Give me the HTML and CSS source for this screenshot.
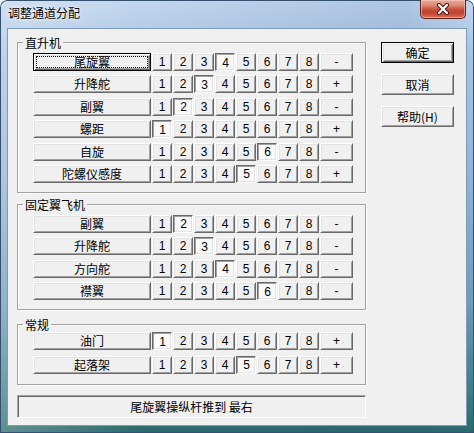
FILE: index.html
```html
<!DOCTYPE html>
<html lang="zh-CN">
<head>
<meta charset="utf-8">
<title>调整通道分配</title>
<link rel="stylesheet" href="styles.css">
</head>
<body>
<div class="window">
  <div class="titlebar">
    <span class="title">调整通道分配</span>
    <button class="close" aria-label="关闭">
      <svg width="14" height="12" viewBox="0 0 14 12"><path d="M3 2 L11 10 M11 2 L3 10" stroke="#4a1a12" stroke-width="4.2" stroke-linecap="round"/><path d="M3 2 L11 10 M11 2 L3 10" stroke="#fff" stroke-width="2.2" stroke-linecap="round"/></svg>
    </button>
  </div>
  <div class="client">
    <div class="main">
      <fieldset class="group g1">
        <legend>直升机</legend>
        <div class="rows">
          <div class="row">
            <button class="btn label default focus">尾旋翼</button>
            <button class="btn num">1</button><button class="btn num">2</button><button class="btn num">3</button><button class="btn num on">4</button><button class="btn num">5</button><button class="btn num">6</button><button class="btn num">7</button><button class="btn num">8</button>
            <button class="btn sign">-</button>
          </div>
          <div class="row">
            <button class="btn label">升降舵</button>
            <button class="btn num">1</button><button class="btn num">2</button><button class="btn num on">3</button><button class="btn num">4</button><button class="btn num">5</button><button class="btn num">6</button><button class="btn num">7</button><button class="btn num">8</button>
            <button class="btn sign">+</button>
          </div>
          <div class="row">
            <button class="btn label">副翼</button>
            <button class="btn num">1</button><button class="btn num on">2</button><button class="btn num">3</button><button class="btn num">4</button><button class="btn num">5</button><button class="btn num">6</button><button class="btn num">7</button><button class="btn num">8</button>
            <button class="btn sign">-</button>
          </div>
          <div class="row">
            <button class="btn label">螺距</button>
            <button class="btn num on">1</button><button class="btn num">2</button><button class="btn num">3</button><button class="btn num">4</button><button class="btn num">5</button><button class="btn num">6</button><button class="btn num">7</button><button class="btn num">8</button>
            <button class="btn sign">+</button>
          </div>
          <div class="row">
            <button class="btn label">自旋</button>
            <button class="btn num">1</button><button class="btn num">2</button><button class="btn num">3</button><button class="btn num">4</button><button class="btn num">5</button><button class="btn num on">6</button><button class="btn num">7</button><button class="btn num">8</button>
            <button class="btn sign">-</button>
          </div>
          <div class="row">
            <button class="btn label">陀螺仪感度</button>
            <button class="btn num">1</button><button class="btn num">2</button><button class="btn num">3</button><button class="btn num">4</button><button class="btn num on">5</button><button class="btn num">6</button><button class="btn num">7</button><button class="btn num">8</button>
            <button class="btn sign">+</button>
          </div>
        </div>
      </fieldset>

      <fieldset class="group g2">
        <legend>固定翼飞机</legend>
        <div class="rows">
          <div class="row">
            <button class="btn label">副翼</button>
            <button class="btn num">1</button><button class="btn num on">2</button><button class="btn num">3</button><button class="btn num">4</button><button class="btn num">5</button><button class="btn num">6</button><button class="btn num">7</button><button class="btn num">8</button>
            <button class="btn sign">-</button>
          </div>
          <div class="row">
            <button class="btn label">升降舵</button>
            <button class="btn num">1</button><button class="btn num">2</button><button class="btn num on">3</button><button class="btn num">4</button><button class="btn num">5</button><button class="btn num">6</button><button class="btn num">7</button><button class="btn num">8</button>
            <button class="btn sign">-</button>
          </div>
          <div class="row">
            <button class="btn label">方向舵</button>
            <button class="btn num">1</button><button class="btn num">2</button><button class="btn num">3</button><button class="btn num on">4</button><button class="btn num">5</button><button class="btn num">6</button><button class="btn num">7</button><button class="btn num">8</button>
            <button class="btn sign">-</button>
          </div>
          <div class="row">
            <button class="btn label">襟翼</button>
            <button class="btn num">1</button><button class="btn num">2</button><button class="btn num">3</button><button class="btn num">4</button><button class="btn num">5</button><button class="btn num on">6</button><button class="btn num">7</button><button class="btn num">8</button>
            <button class="btn sign">-</button>
          </div>
        </div>
      </fieldset>

      <fieldset class="group g3">
        <legend>常规</legend>
        <div class="rows">
          <div class="row">
            <button class="btn label">油门</button>
            <button class="btn num on">1</button><button class="btn num">2</button><button class="btn num">3</button><button class="btn num">4</button><button class="btn num">5</button><button class="btn num">6</button><button class="btn num">7</button><button class="btn num">8</button>
            <button class="btn sign">+</button>
          </div>
          <div class="row">
            <button class="btn label">起落架</button>
            <button class="btn num">1</button><button class="btn num">2</button><button class="btn num">3</button><button class="btn num">4</button><button class="btn num on">5</button><button class="btn num">6</button><button class="btn num">7</button><button class="btn num">8</button>
            <button class="btn sign">+</button>
          </div>
        </div>
      </fieldset>

      <div class="status">尾旋翼操纵杆推到 最右</div>
    </div>

    <div class="side">
      <button class="btn cmd default">确定</button>
      <button class="btn cmd">取消</button>
      <button class="btn cmd">帮助(H)</button>
    </div>
  </div>
</div>
</body>
</html>
```

FILE: styles.css
```css
* { box-sizing: border-box; }

html, body {
  margin: 0;
  padding: 0;
  background: #ffffff;
}

body {
  font-family: "Noto Sans CJK SC", sans-serif;
  font-size: 12px;
  color: #000;
}

.window {
  width: 474px;
  height: 433px;
  padding: 0 8px 8px 8px;
  border-radius: 7px 7px 0 0;
  background:
    linear-gradient(90deg, rgba(255,255,255,0.25) 0%, rgba(255,255,255,0) 30%, rgba(40,80,140,0.12) 85%, rgba(255,255,255,0) 100%),
    linear-gradient(180deg, #c3d7ee 0%, #a9c4e3 12%, #93b4d8 40%, #6d9bb8 70%, #3f7f85 90%, #2a6a6c 100%);
  box-shadow: inset 0 0 0 1px #34506e;
  display: flex;
  flex-direction: column;
}

.titlebar {
  height: 29px;
  margin: 0 -8px;
  display: flex;
  justify-content: space-between;
  align-items: flex-start;
  padding-left: 8px;
  padding-right: 8px;
}

.title {
  margin-top: 6px;
  line-height: 14px;
  font-size: 12px;
  color: #000;
  text-shadow: 0 0 5px rgba(255,255,255,0.95), 0 0 2px rgba(255,255,255,0.9);
}

.close {
  width: 46px;
  height: 19px;
  margin: 0;
  padding: 0;
  border: 1px solid #5a2018;
  border-top: none;
  border-radius: 0 0 5px 5px;
  background: linear-gradient(180deg, #e9a999 0%, #dd8a76 30%, #c9503a 52%, #c0412d 70%, #d9705a 100%);
  box-shadow: inset 0 0 0 1px rgba(255,210,200,0.55);
  display: flex;
  align-items: center;
  justify-content: center;
}

.client {
  height: 396px;
  background: #f0f0f0;
  display: flex;
  align-items: flex-start;
  box-shadow: 0 0 0 1px #7f9bb7;
}

.main {
  width: 349px;
  margin-left: 9px;
  padding-top: 7px;
  display: flex;
  flex-direction: column;
}

.group {
  margin: 0;
  min-width: 0;
  width: 349px;
  padding: 0;
  border: 1px solid #a0a0a0;
  box-shadow: inset 1px 1px 0 #fff, 1px 1px 0 #fff;
}

.group legend {
  margin-left: 5px;
  padding: 0 2px;
  line-height: 13px;
  height: 13px;
  font-size: 12px;
  background: #f0f0f0;
}

.g1 { padding-top: 4px; padding-bottom: 9px; }
.g2 { margin-top: 5px; padding-top: 4px; padding-bottom: 9px; }
.g3 { margin-top: 8px; padding-top: 1px; padding-bottom: 10px; }
.g3 .rows { gap: 5.5px; }

.rows {
  display: flex;
  flex-direction: column;
  gap: 4.4px;
  padding-left: 15px;
}

.row {
  display: flex;
  gap: 1px;
  height: 18px;
}

.btn {
  margin: 0;
  padding: 0;
  font-family: "Liberation Sans", "Noto Sans CJK SC", sans-serif;
  font-size: 12px;
  line-height: 14px;
  color: #000;
  background: #f0f0f0;
  border: 1px solid;
  border-color: #ffffff #696969 #696969 #ffffff;
  box-shadow: inset 1px 1px 0 #e3e3e3, inset -1px -1px 0 #a0a0a0;
  display: flex;
  align-items: center;
  justify-content: center;
}

.btn.label {
  width: 118px;
  font-family: "Noto Sans CJK SC", sans-serif;
}

.btn.num { width: 20px; }
.btn.sign { width: 33px; }

.btn.on {
  background: #f9f9f9;
  border-color: #696969 #ffffff #ffffff #696969;
  box-shadow: inset 1px 1px 0 #a0a0a0, inset -1px -1px 0 #e3e3e3;
  padding: 1px 0 0 1px;
}

.btn.default {
  border: 1px solid #000;
  box-shadow: inset 1px 1px 0 #fff, inset -1px -1px 0 #696969, inset 2px 2px 0 #e3e3e3, inset -2px -2px 0 #a0a0a0;
}

.btn.focus {
  outline: 1px dotted #000;
  outline-offset: -4px;
}

.status {
  margin-top: 10px;
  height: 23px;
  width: 349px;
  border: 1px solid;
  border-color: #a0a0a0 #ffffff #ffffff #a0a0a0;
  box-shadow: inset 1px 1px 0 #696969;
  display: flex;
  align-items: center;
  justify-content: center;
  padding-top: 1px;
  font-size: 12px;
}

.side {
  margin-left: 15px;
  padding-top: 13px;
  display: flex;
  flex-direction: column;
}

.btn.cmd {
  width: 73px;
  height: 21px;
  font-family: "Noto Sans CJK SC", sans-serif;
}

.btn.cmd + .btn.cmd { margin-top: 11px; }
.btn.cmd:last-child { margin-top: 12px; }
```
